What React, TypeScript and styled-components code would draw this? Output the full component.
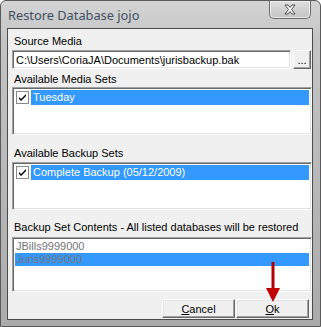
import React from 'react'
import styled, { createGlobalStyle } from 'styled-components'

const GlobalStyle = createGlobalStyle`
  html, body {
    margin: 0;
    padding: 0;
    background: #ffffff;
  }
  body {
    font-family: "Liberation Sans", Arial, sans-serif;
    font-size: 11px;
  }
`

const Window = styled.div`
  position: relative;
  width: 321px;
  height: 327px;
  box-sizing: border-box;
  display: flex;
  flex-direction: column;
  background: linear-gradient(#d4d4d4, #c4c4c4 40px, #ababab);
  border: 1px solid #5a5a5a;
  border-radius: 6px 6px 0 0;
  overflow: hidden;
`

const TitleBar = styled.div`
  height: 27px;
  flex: none;
  display: flex;
  align-items: flex-start;
  justify-content: space-between;
  padding-left: 7px;
  box-sizing: border-box;
`

const Title = styled.span`
  font-family: "Noto Sans", "Open Sans", sans-serif;
  font-size: 12.8px;
  color: #3d4f63;
  margin-top: 5px;
`

const CloseButton = styled.div`
  width: 42px;
  height: 18px;
  margin-right: 9px;
  box-sizing: border-box;
  border: 1px solid #6f6f6f;
  border-top: none;
  border-radius: 0 0 5px 5px;
  background: linear-gradient(#dedede, #c4c4c4);
  box-shadow: inset 0 0 0 1px rgba(255, 255, 255, 0.55);
  display: flex;
  align-items: center;
  justify-content: center;
`

const Middle = styled.div`
  flex: 1;
  display: flex;
  padding: 0 7px 0 6px;
  min-height: 0;
`

const Client = styled.div`
  flex: 1;
  background: #f0f0f0;
  border: 1px solid #4b4b4b;
  display: flex;
  flex-direction: column;
  padding: 0 0 0 4px;
`

const BottomFrame = styled.div`
  height: 6px;
  flex: none;
`

const Label = styled.div<{ top: number }>`
  color: #000;
  height: 13px;
  line-height: 13px;
  margin-top: ${(p) => p.top}px;
  margin-left: 2px;
  white-space: nowrap;
`

const PathRow = styled.div`
  display: flex;
  gap: 2px;
  margin-top: 2px;
  padding-right: 1px;
`

const TextInput = styled.div`
  flex: 1;
  height: 19px;
  box-sizing: border-box;
  background: #fff;
  border: 1px solid;
  border-color: #a0a0a0 #fff #fff #a0a0a0;
  box-shadow: inset 1px 1px 0 #696969, inset -1px -1px 0 #e3e3e3;
  padding: 2px 0 0 3px;
  line-height: 14px;
  white-space: nowrap;
  overflow: hidden;
`

const SmallButton = styled.div`
  width: 18px;
  height: 19px;
  box-sizing: border-box;
  border: 1px solid;
  border-color: #fff #696969 #696969 #fff;
  box-shadow: inset -1px -1px 0 #a0a0a0;
  background: #f0f0f0;
  display: flex;
  align-items: flex-end;
  justify-content: center;
  padding-bottom: 3px;
  line-height: 10px;
`

const ListBox = styled.div<{ h: number; top: number }>`
  height: ${(p) => p.h}px;
  flex: none;
  box-sizing: border-box;
  margin-top: ${(p) => p.top}px;
  background: #fff;
  border: 1px solid;
  border-color: #a0a0a0 #fff #fff #a0a0a0;
  box-shadow: inset 1px 1px 0 #696969, inset -1px -1px 0 #e3e3e3;
  padding: 2px 2px 0 2px;
  overflow: hidden;
`

const CheckRow = styled.div`
  display: flex;
  align-items: center;
  height: 15px;
  gap: 2px;
`

const CheckBox = styled.div`
  width: 13px;
  height: 13px;
  margin-left: 1px;
  box-sizing: border-box;
  border: 1px solid #8a8a8a;
  background: #fff;
  display: flex;
  align-items: center;
  justify-content: center;
`

const SelectedText = styled.div`
  flex: 1;
  height: 15px;
  line-height: 15px;
  background: #3399ff;
  color: #fff;
  padding-left: 2px;
  white-space: nowrap;
`

const PlainRow = styled.div<{ selected?: boolean }>`
  height: 13px;
  line-height: 13px;
  color: #747474;
  background: ${(p) => (p.selected ? '#3399ff' : 'transparent')};
  padding-left: 1px;
  white-space: nowrap;
`

const ButtonRow = styled.div`
  display: flex;
  justify-content: flex-end;
  gap: 1px;
  margin-top: 7px;
  padding-right: 3px;
`

const PushButton = styled.div`
  width: 73px;
  height: 19px;
  box-sizing: border-box;
  border: 1px solid;
  border-color: #fff #696969 #696969 #fff;
  box-shadow: inset -1px -1px 0 #a0a0a0, inset 1px 1px 0 #e3e3e3;
  background: #f0f0f0;
  display: flex;
  align-items: center;
  justify-content: center;
  font-size: 11px;
  line-height: 14px;
  padding-top: 1px;
`

const U = styled.span`
  text-decoration: underline;
`

const Arrow = styled.svg`
  position: absolute;
  left: 264px;
  top: 261px;
`

function Check() {
  return (
    <svg width="9" height="9" viewBox="0 0 9 9">
      <path d="M1 4 L3 6 L8 1 L8 3 L3 8 L1 6 Z" fill="#000" />
    </svg>
  )
}

export default function App() {
  return (
    <>
      <GlobalStyle />
      <Window>
        <TitleBar>
          <Title>Restore Database jojo</Title>
          <CloseButton>
            <svg width="14" height="11" viewBox="0 0 14 11">
              <path
                d="M2 1 L5 1 L7 3.5 L9 1 L12 1 L8.5 5.5 L12 10 L9 10 L7 7.5 L5 10 L2 10 L5.5 5.5 Z"
                fill="#fff"
                stroke="#4a4a4a"
                strokeWidth="1"
                strokeLinejoin="round"
              />
            </svg>
          </CloseButton>
        </TitleBar>
        <Middle>
          <Client>
            <Label top={6}>Source Media</Label>
            <PathRow>
              <TextInput>C:\Users\CoriaJA\Documents\jurisbackup.bak</TextInput>
              <SmallButton>...</SmallButton>
            </PathRow>
            <Label top={4}>Available Media Sets</Label>
            <ListBox h={48} top={1}>
              <CheckRow>
                <CheckBox>
                  <Check />
                </CheckBox>
                <SelectedText>Tuesday</SelectedText>
              </CheckRow>
            </ListBox>
            <Label top={12}>Available Backup Sets</Label>
            <ListBox h={48} top={2}>
              <CheckRow>
                <CheckBox>
                  <Check />
                </CheckBox>
                <SelectedText>Complete Backup (05/12/2009)</SelectedText>
              </CheckRow>
            </ListBox>
            <Label top={11}>Backup Set Contents - All listed databases will be restored</Label>
            <ListBox h={55} top={3}>
              <PlainRow>JBills9999000</PlainRow>
              <PlainRow selected>Juris9999000</PlainRow>
            </ListBox>
            <ButtonRow>
              <PushButton>
                <span>
                  <U>C</U>ancel
                </span>
              </PushButton>
              <PushButton>
                <span>
                  <U>O</U>k
                </span>
              </PushButton>
            </ButtonRow>
          </Client>
        </Middle>
        <BottomFrame />
        <Arrow width="16" height="42" viewBox="0 0 16 42">
          <rect x="6.5" y="0" width="3" height="27" fill="#b00000" />
          <path d="M1 26 L15 26 L8 40 Z" fill="#c00000" />
        </Arrow>
      </Window>
    </>
  )
}
